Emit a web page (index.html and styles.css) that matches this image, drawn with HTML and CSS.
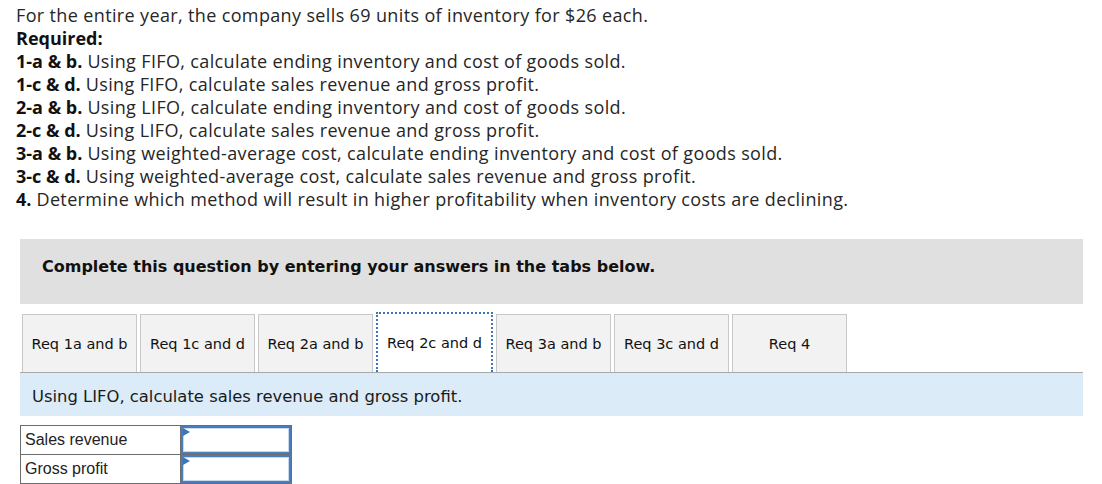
FILE: index.html
```html
<!DOCTYPE html>
<html>
<head>
<meta charset="utf-8">
<link rel="stylesheet" href="styles.css">
</head>
<body>
<div class="page">
  <div class="intro">
    <p>For the entire year, the company sells 69 units of inventory for $26 each.</p>
    <p><b>Required:</b></p>
    <p><b>1-a &amp; b.</b> Using FIFO, calculate ending inventory and cost of goods sold.</p>
    <p><b>1-c &amp; d.</b> Using FIFO, calculate sales revenue and gross profit.</p>
    <p><b>2-a &amp; b.</b> Using LIFO, calculate ending inventory and cost of goods sold.</p>
    <p><b>2-c &amp; d.</b> Using LIFO, calculate sales revenue and gross profit.</p>
    <p><b>3-a &amp; b.</b> Using weighted-average cost, calculate ending inventory and cost of goods sold.</p>
    <p><b>3-c &amp; d.</b> Using weighted-average cost, calculate sales revenue and gross profit.</p>
    <p><b>4.</b> Determine which method will result in higher profitability when inventory costs are declining.</p>
  </div>

  <div class="banner">Complete this question by entering your answers in the tabs below.</div>

  <div class="tabs">
    <div class="tab">Req 1a and b</div>
    <div class="tab">Req 1c and d</div>
    <div class="tab">Req 2a and b</div>
    <div class="tab active">Req 2c and d</div>
    <div class="tab">Req 3a and b</div>
    <div class="tab">Req 3c and d</div>
    <div class="tab">Req 4</div>
  </div>

  <div class="panel">Using LIFO, calculate sales revenue and gross profit.</div>

  <table class="answers">
    <tr><td class="label">Sales revenue</td><td class="field"><div class="input"></div></td></tr>
    <tr><td class="label">Gross profit</td><td class="field"><div class="input"></div></td></tr>
  </table>
</div>
</body>
</html>
```

FILE: styles.css
```css
html, body {
  margin: 0;
  padding: 0;
  background: #ffffff;
}

.page {
  padding: 4px 0 0 20px;
  width: 1063px;
}

.intro {
  margin-left: -4px;
  font-family: "Open Sans", "Lato", sans-serif;
  font-size: 18px;
  letter-spacing: 0.36px;
  line-height: 23px;
  color: #262626;
}

.intro p {
  margin: 0;
  white-space: nowrap;
}

.intro b {
  font-weight: 700;
  letter-spacing: 0;
  color: #111111;
}

.banner {
  margin-top: 28px;
  height: 65px;
  background: #e0e0e0;
  display: flex;
  align-items: center;
  padding-left: 22px;
  padding-bottom: 10px;
  box-sizing: border-box;
  font-family: "DejaVu Sans", Verdana, sans-serif;
  font-weight: bold;
  font-size: 16px;
  color: #111111;
}

.tabs {
  display: flex;
  gap: 3px;
  margin-top: 10px;
  padding-left: 2px;
  height: 58px;
  align-items: flex-end;
}

.tab {
  width: 115px;
  height: 58px;
  box-sizing: border-box;
  background: #f2f2f2;
  border: 1px solid #c8c8c8;
  border-bottom: none;
  display: flex;
  align-items: center;
  justify-content: center;
  font-family: "DejaVu Sans", Verdana, sans-serif;
  font-size: 14.5px;
  color: #111111;
}

.tab.active {
  background: #ffffff;
  border: 2px dotted #3f74b8;
  border-bottom: none;
  height: 60px;
  width: 117px;
}

.panel {
  height: 44px;
  background: #dbebf8;
  border-top: 1px solid #a9a9a9;
  box-sizing: border-box;
  display: flex;
  align-items: center;
  padding-left: 12px;
  padding-top: 3px;
  font-family: "DejaVu Sans", Verdana, sans-serif;
  font-size: 16.4px;
  color: #1a1a1a;
}

.answers {
  margin-top: 9px;
  border-collapse: collapse;
  font-family: "Liberation Sans", Arial, sans-serif;
  font-size: 16px;
  color: #222222;
}

.answers td {
  border: 1px solid #6d6d6d;
  height: 28px;
  padding: 0;
}

.answers .label {
  width: 155px;
  padding-left: 4px;
}

.answers .field {
  width: 110px;
}

.input {
  position: relative;
  height: 24px;
  margin: 0;
  border: 2px solid #4a7cba;
  box-shadow: inset 0 0 0 1px #c7d9ee;
  background: #ffffff;
}

.input::before {
  content: "";
  position: absolute;
  left: 0;
  top: 0;
  border-left: 7px solid #3d74b8;
  border-top: 4px solid transparent;
  border-bottom: 4px solid transparent;
}
```
